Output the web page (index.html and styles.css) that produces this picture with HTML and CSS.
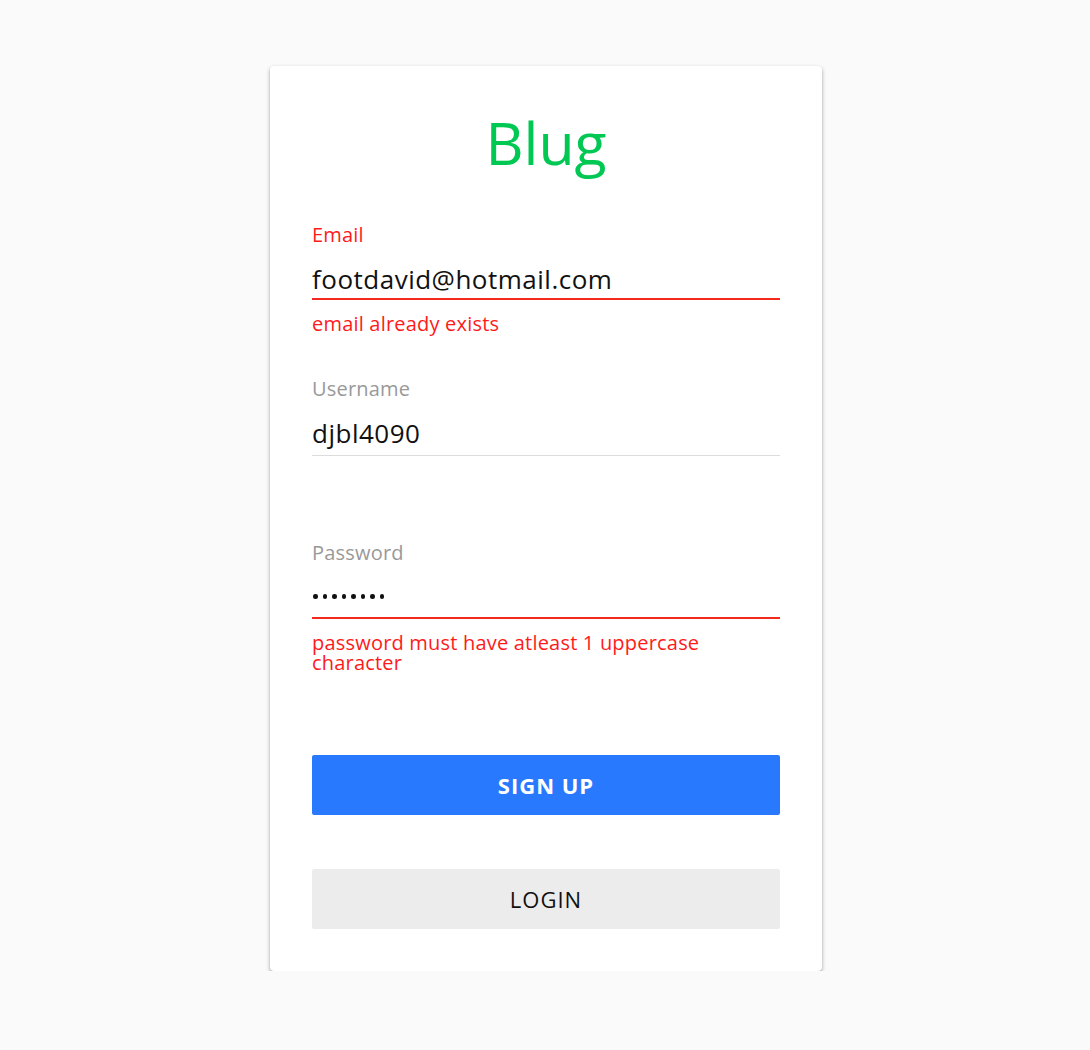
FILE: index.html
```html
<!DOCTYPE html>
<html lang="en">
<head>
<meta charset="utf-8">
<title>Blug - Sign up</title>
<link rel="stylesheet" href="styles.css">
</head>
<body>
<main class="card">
  <h1 class="brand">Blug</h1>
  <form class="form">
    <div class="field field-email field-error">
      <label class="field-label" for="email">Email</label>
      <input class="field-input" id="email" type="text" value="footdavid@hotmail.com">
      <p class="field-help">email already exists</p>
    </div>
    <div class="field field-plain">
      <label class="field-label" for="username">Username</label>
      <input class="field-input" id="username" type="text" value="djbl4090">
    </div>
    <div class="field field-password">
      <label class="field-label" for="password">Password</label>
      <div class="field-input dots" id="password"><span></span><span></span><span></span><span></span><span></span><span></span><span></span><span></span></div>
      <p class="field-help">password must have atleast 1 uppercase character</p>
    </div>
    <div class="actions">
      <button type="button" class="btn btn-primary">SIGN UP</button>
      <button type="button" class="btn btn-secondary">LOGIN</button>
    </div>
  </form>
</main>
</body>
</html>
```

FILE: styles.css
```css
* { box-sizing: border-box; }

html, body {
  margin: 0;
  padding: 0;
  background: #fafafa;
  font-family: "Open Sans", "Lato", "Liberation Sans", sans-serif;
}

body { padding-left: 2px; }

.card {
  width: 552px;
  margin: 66px auto 0;
  padding: 46px 42px 42px;
  background: #fff;
  border-radius: 4px;
  box-shadow: 0 1px 2px rgba(0,0,0,0.1), 0 2px 4px rgba(0,0,0,0.3);
}

.brand {
  margin: 0;
  font-size: 59px;
  line-height: 60px;
  font-weight: 400;
  color: #00c853;
  text-align: center;
}

.form {
  display: flex;
  flex-direction: column;
  margin-top: 51px;
}

.field {
  display: flex;
  flex-direction: column;
}

.field-label {
  font-size: 20px;
  line-height: 24px;
  letter-spacing: 0.2px;
  color: #999;
}

.field-error .field-label { color: #ff1a1a; }

.field-input {
  display: block;
  width: 100%;
  margin: 16px 0 0;
  padding: 0 0 3px;
  border: 0;
  border-bottom: 2px solid #f4291d;
  outline: none;
  background: transparent;
  font-family: inherit;
  font-size: 26px;
  line-height: 32px;
  letter-spacing: 0.5px;
  height: 37px;
  color: #111;
}

.field-plain .field-input {
  border-bottom: 1px solid #dcdcdc;
  padding-bottom: 6px;
  height: 39px;
}

.field-help {
  margin: 14px 0 0;
  font-size: 20px;
  line-height: 20px;
  letter-spacing: 0.2px;
  color: #ff1a1a;
}

.field-plain { margin-top: 43px; }
.field-password { margin-top: 85px; }

.dots {
  display: flex;
  align-items: flex-start;
  gap: 5px;
  height: 38px;
  padding: 13px 0 0 1px;
}

.dots span {
  width: 4.5px;
  height: 4.5px;
  border-radius: 50%;
  background: #111;
}

.actions {
  display: flex;
  flex-direction: column;
  gap: 54px;
  margin-top: 82px;
}

.btn {
  display: block;
  width: 100%;
  height: 60px;
  border: 0;
  border-radius: 2px;
  font-family: inherit;
  font-size: 22px;
  letter-spacing: 1px;
  cursor: pointer;
}

.btn-primary {
  background: #2979ff;
  color: #fff;
  font-weight: 700;
}

.btn-secondary {
  background: #ececec;
  color: #111;
  font-weight: 400;
}
```
